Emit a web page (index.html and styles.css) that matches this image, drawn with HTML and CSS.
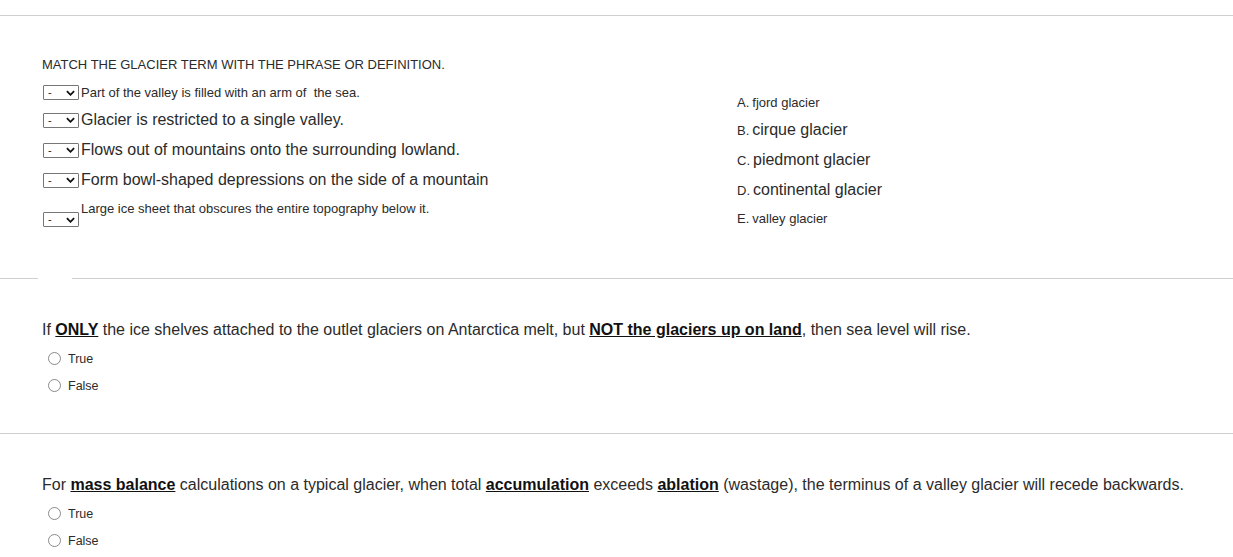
FILE: index.html
```html
<!DOCTYPE html>
<html>
<head>
<meta charset="utf-8">
<link rel="stylesheet" href="styles.css">
</head>
<body>
<div class="rule rule-top"></div>

<section class="q q-match">
  <div class="title">MATCH THE GLACIER TERM WITH THE PHRASE OR DEFINITION.</div>
  <div class="match">
    <div class="left">
      <div class="row r1"><span class="sel"><span class="dash">-</span><svg class="chev" viewBox="0 0 10 6"><path d="M1 1 L5 5 L9 1" /></svg></span><span class="txt small">Part of the valley is filled with an arm of&nbsp; the sea.</span></div>
      <div class="row r2"><span class="sel"><span class="dash">-</span><svg class="chev" viewBox="0 0 10 6"><path d="M1 1 L5 5 L9 1" /></svg></span><span class="txt big">Glacier is restricted to a single valley.</span></div>
      <div class="row r3"><span class="sel"><span class="dash">-</span><svg class="chev" viewBox="0 0 10 6"><path d="M1 1 L5 5 L9 1" /></svg></span><span class="txt big">Flows out of mountains onto the surrounding lowland.</span></div>
      <div class="row r4"><span class="sel"><span class="dash">-</span><svg class="chev" viewBox="0 0 10 6"><path d="M1 1 L5 5 L9 1" /></svg></span><span class="txt big">Form bowl-shaped depressions on the side of a mountain</span></div>
      <div class="row r5"><span class="sel"><span class="dash">-</span><svg class="chev" viewBox="0 0 10 6"><path d="M1 1 L5 5 L9 1" /></svg></span><span class="txt small">Large ice sheet that obscures the entire topography below it.</span></div>
    </div>
    <div class="right">
      <div class="opt o1"><span class="lt">A.</span> <span class="small">fjord glacier</span></div>
      <div class="opt o2"><span class="lt">B.</span> <span class="big">cirque glacier</span></div>
      <div class="opt o3"><span class="lt">C.</span> <span class="big">piedmont glacier</span></div>
      <div class="opt o4"><span class="lt">D.</span> <span class="big">continental glacier</span></div>
      <div class="opt o5"><span class="lt">E.</span> <span class="small">valley glacier</span></div>
    </div>
  </div>
</section>

<div class="rule rule-gap"><span class="seg seg-a"></span><span class="seg seg-b"></span></div>

<section class="q q-tf">
  <p class="stem">If <b><u>ONLY</u></b> the ice shelves attached to the outlet glaciers on Antarctica melt, but <b><u>NOT the glaciers up on land</u></b>, then sea level will rise.</p>
  <div class="choice"><span class="radio"></span><span class="lab">True</span></div>
  <div class="choice"><span class="radio"></span><span class="lab">False</span></div>
</section>

<div class="rule rule-3"></div>

<section class="q q-tf q3">
  <p class="stem">For <b><u>mass balance</u></b> calculations on a typical glacier, when total <b><u>accumulation</u></b> exceeds <b><u>ablation</u></b> (wastage), the terminus of a valley glacier will recede backwards.</p>
  <div class="choice"><span class="radio"></span><span class="lab">True</span></div>
  <div class="choice"><span class="radio"></span><span class="lab">False</span></div>
</section>
</body>
</html>
```

FILE: styles.css
```css
html, body {
  margin: 0;
  padding: 0;
  background: #fff;
}
body {
  font-family: "Liberation Sans", Arial, sans-serif;
  color: #2d2d2d;
  width: 1233px;
  overflow: hidden;
}
.rule {
  height: 1px;
  background: #cfcfcf;
}
.rule-top {
  margin-top: 15px;
}
.q {
  padding-left: 42px;
}
.q-match {
  padding-top: 41px;
  height: 262px;
  box-sizing: border-box;
}
.title {
  font-size: 13px;
  line-height: 16px;
  color: #2b2b2b;
}
.match {
  display: flex;
  margin-top: 7px;
}
.left {
  width: 695px;
  display: flex;
  flex-direction: column;
}
.row {
  display: flex;
  align-items: center;
  height: 30px;
}
.r1 { height: 25px; }
.r5 { align-items: flex-start; height: 34px; padding-top: 6px; box-sizing: border-box; }
.r5 .sel { margin-top: 11px; }
.sel {
  height: 13px;
  border: 1px solid #767676;
  border-radius: 1px;
  display: flex;
  align-items: center;
  justify-content: space-between;
  padding: 0 3px 0 4px;
  box-sizing: content-box;
  margin-left: 1px;
  margin-right: 2px;
  flex: none;
  width: 27px;
}
.dash {
  font-size: 11px;
  line-height: 13px;
  color: #222;
}
.chev {
  width: 9px;
  height: 6px;
  fill: none;
  stroke: #111;
  stroke-width: 2;
}
.txt {
  color: #2b2b2b;
}
.small {
  font-size: 13px;
}
.big {
  font-size: 16px;
}
.right {
  display: flex;
  flex-direction: column;
  padding-top: 10px;
}
.opt {
  height: 30px;
  display: flex;
  align-items: center;
  gap: 3px;
  color: #2b2b2b;
}
.o1 { height: 25px; }
.o5 { margin-top: -2px; }
.lt {
  font-size: 13px;
}
.rule-gap {
  background: transparent;
  display: flex;
}
.seg {
  height: 1px;
  background: #cfcfcf;
}
.seg-a { width: 38px; }
.seg-b { flex: 1; margin-left: 34px; }
.q-tf {
  padding-top: 41px;
  height: 154px;
  box-sizing: border-box;
}
.stem {
  margin: 0 0 5px 0;
  font-size: 16px;
  line-height: 20px;
  color: #2b2b2b;
}
.stem b {
  color: #111;
}
.choice {
  display: flex;
  align-items: center;
  height: 27px;
  padding-left: 6px;
}
.radio {
  width: 11px;
  height: 11px;
  border: 1px solid #8a8a8a;
  border-radius: 50%;
  margin-right: 7px;
}
.lab {
  font-size: 12.5px;
  color: #2b2b2b;
}
.q3 {
  height: auto;
}
```
